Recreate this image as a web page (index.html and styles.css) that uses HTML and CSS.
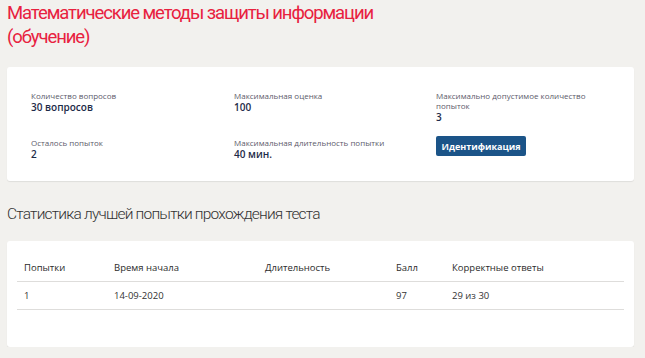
FILE: index.html
```html
<!doctype html>
<html>
<head>
<meta charset="utf-8">
<title>Тест</title>
<link rel="stylesheet" href="styles.css">
</head>
<body>
<div class="page">
	<h1 class="test-title">Математические методы защиты информации (обучение)</h1>

	<div class="card info-card">
		<div class="info-grid">
			<div class="info-item">
				<div class="info-label">Количество вопросов</div>
				<div class="info-value">30 вопросов</div>
			</div>
			<div class="info-item">
				<div class="info-label">Максимальная оценка</div>
				<div class="info-value">100</div>
			</div>
			<div class="info-item">
				<div class="info-label">Максимально допустимое количество попыток</div>
				<div class="info-value">3</div>
			</div>
			<div class="info-item">
				<div class="info-label">Осталось попыток</div>
				<div class="info-value">2</div>
			</div>
			<div class="info-item">
				<div class="info-label">Максимальная длительность попытки</div>
				<div class="info-value">40 мин.</div>
			</div>
			<div class="info-item">
				<button class="btn-ident" type="button">Идентификация</button>
			</div>
		</div>
	</div>

	<h2 class="section-title">Статистика лучшей попытки прохождения теста</h2>

	<div class="card stats-card">
		<table class="stats">
			<colgroup>
				<col class="c-try">
				<col class="c-start">
				<col class="c-dur">
				<col class="c-score">
				<col class="c-correct">
			</colgroup>
			<thead>
				<tr>
					<th>Попытки</th>
					<th>Время начала</th>
					<th>Длительность</th>
					<th>Балл</th>
					<th>Корректные ответы</th>
				</tr>
			</thead>
			<tbody>
				<tr>
					<td>1</td>
					<td>14-09-2020</td>
					<td></td>
					<td>97</td>
					<td>29 из 30</td>
				</tr>
			</tbody>
		</table>
	</div>
</div>
</body>
</html>
```

FILE: styles.css
```css
html, body {
	margin: 0;
	padding: 0;
	background: #f2f1ee;
}
body {
	font-family: "Open Sans", "Liberation Sans", sans-serif;
	color: #333;
}
.page {
	padding: 0 11px 0 7px;
}
.test-title {
	margin: 0;
	padding-top: 1px;
	font-family: Roboto, "Liberation Sans", sans-serif;
	font-size: 18.5px;
	line-height: 24px;
	font-weight: 400;
	letter-spacing: -1.1px;
	color: #e8213f;
	max-width: 420px;
}
.card {
	background: #fff;
	border-radius: 3px;
	box-shadow: 0 1px 1px rgba(0, 0, 0, 0.08);
}
.info-card {
	margin-top: 18px;
	padding: 24px 24px 21px 24px;
}
.info-grid {
	display: grid;
	grid-template-columns: 203px 202px 1fr;
	row-gap: 15px;
}
.info-label {
	font-size: 8px;
	line-height: 10px;
	color: #5c5a6a;
	width: 170px;
}
.info-value {
	font-size: 10px;
	line-height: 12px;
	font-weight: 600;
	color: #1d2b48;
}
.btn-ident {
	display: block;
	width: 90px;
	height: 20px;
	margin-top: -2px;
	padding: 0;
	border: 0;
	border-radius: 2px;
	background: #1b5488;
	color: #fff;
	font-family: "Open Sans", "Liberation Sans", sans-serif;
	font-size: 9px;
	font-weight: 700;
}
.section-title {
	margin: 23px 0 0 0;
	font-family: Roboto, "Liberation Sans", sans-serif;
	font-size: 15.5px;
	line-height: 20px;
	font-weight: 300;
	letter-spacing: -0.8px;
	color: #333;
}
.stats-card {
	margin-top: 17px;
	padding: 13px 10px 37px 10px;
}
.stats {
	width: 100%;
	border-collapse: collapse;
	font-size: 9.5px;
	color: #333;
}
.c-try { width: 90px; }
.c-start { width: 151px; }
.c-dur { width: 131px; }
.c-score { width: 56px; }
.stats th,
.stats td {
	text-align: left;
	font-weight: 400;
	padding: 0 7px;
	height: 27px;
	border-bottom: 1px solid #dedddb;
}
.stats th {
	color: #2b2b2b;
}
```
